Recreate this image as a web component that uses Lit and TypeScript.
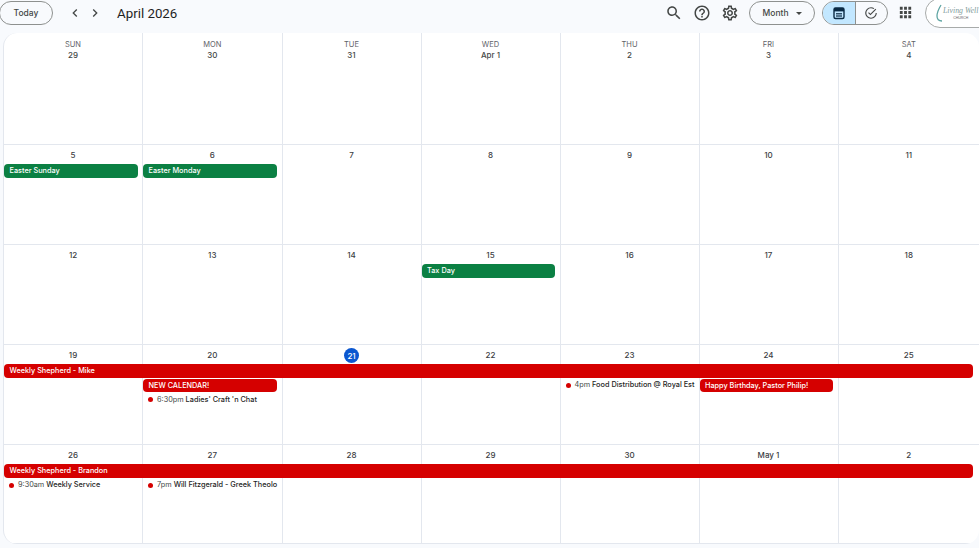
import { LitElement, html, css, svg } from "lit";
import { customElement } from "lit/decorators.js";

type Ev = { col: number; span: number; row: number; text: string; kind: "green" | "red" | "dot"; time?: string };
type Week = { days: string[]; today?: number; events: Ev[] };

const DAYS = ["SUN", "MON", "TUE", "WED", "THU", "FRI", "SAT"];
const WEEKS: Week[] = [
  { days: ["29", "30", "31", "Apr 1", "2", "3", "4"], events: [] },
  {
    days: ["5", "6", "7", "8", "9", "10", "11"],
    events: [
      { col: 1, span: 1, row: 2, text: "Easter Sunday", kind: "green" },
      { col: 2, span: 1, row: 2, text: "Easter Monday", kind: "green" },
    ],
  },
  {
    days: ["12", "13", "14", "15", "16", "17", "18"],
    events: [{ col: 4, span: 1, row: 2, text: "Tax Day", kind: "green" }],
  },
  {
    days: ["19", "20", "21", "22", "23", "24", "25"],
    today: 2,
    events: [
      { col: 1, span: 7, row: 2, text: "Weekly Shepherd - Mike", kind: "red" },
      { col: 2, span: 1, row: 3, text: "NEW CALENDAR!", kind: "red" },
      { col: 2, span: 1, row: 4, text: "Ladies' Craft 'n Chat", time: "6:30pm", kind: "dot" },
      { col: 5, span: 1, row: 3, text: "Food Distribution @ Royal Est", time: "4pm", kind: "dot" },
      { col: 6, span: 1, row: 3, text: "Happy Birthday, Pastor Philip!", kind: "red" },
    ],
  },
  {
    days: ["26", "27", "28", "29", "30", "May 1", "2"],
    events: [
      { col: 1, span: 7, row: 2, text: "Weekly Shepherd - Brandon", kind: "red" },
      { col: 1, span: 1, row: 3, text: "Weekly Service", time: "9:30am", kind: "dot" },
      { col: 2, span: 1, row: 3, text: "Will Fitzgerald - Greek Theolo", time: "7pm", kind: "dot" },
    ],
  },
];

const icon = (d: string, size = 18, fill = "#444746") => html`<svg width=${size} height=${size} viewBox="0 0 24 24" fill=${fill}>${svg`<path d=${d}></path>`}</svg>`;

const SEARCH = "M15.5 14h-.79l-.28-.27C15.41 12.59 16 11.11 16 9.5 16 5.91 13.09 3 9.5 3S3 5.91 3 9.5 5.91 16 9.5 16c1.61 0 3.09-.59 4.23-1.57l.27.28v.79l5 4.99L20.49 19l-4.99-5zm-6 0C7.01 14 5 11.99 5 9.5S7.01 5 9.5 5 14 7.01 14 9.5 11.99 14 9.5 14z";
const HELP = "M11 18h2v-2h-2v2zm1-16C6.48 2 2 6.48 2 12s4.48 10 10 10 10-4.48 10-10S17.52 2 12 2zm0 18c-4.41 0-8-3.59-8-8s3.59-8 8-8 8 3.59 8 8-3.59 8-8 8zm0-14c-2.21 0-4 1.79-4 4h2c0-1.1.9-2 2-2s2 .9 2 2c0 2-3 1.75-3 5h2c0-2.25 3-2.5 3-5 0-2.21-1.79-4-4-4z";
const GEAR = "M19.43 12.98c.04-.32.07-.64.07-.98 0-.34-.03-.66-.07-.98l2.11-1.65c.19-.15.24-.42.12-.64l-2-3.46c-.09-.16-.26-.25-.44-.25-.06 0-.12.01-.17.03l-2.49 1c-.52-.4-1.08-.73-1.69-.98l-.38-2.65C14.46 2.18 14.25 2 14 2h-4c-.25 0-.46.18-.49.42l-.38 2.65c-.61.25-1.17.59-1.69.98l-2.49-1c-.06-.02-.12-.03-.18-.03-.17 0-.34.09-.43.25l-2 3.46c-.13.22-.07.49.12.64l2.11 1.65c-.04.32-.07.65-.07.98 0 .33.03.66.07.98l-2.11 1.65c-.19.15-.24.42-.12.64l2 3.46c.09.16.26.25.44.25.06 0 .12-.01.17-.03l2.49-1c.52.4 1.08.73 1.69.98l.38 2.65c.03.24.24.42.49.42h4c.25 0 .46-.18.49-.42l.38-2.65c.61-.25 1.17-.59 1.69-.98l2.49 1c.06.02.12.03.18.03.17 0 .34-.09.43-.25l2-3.46c.12-.22.07-.49-.12-.64l-2.11-1.65zm-1.98-1.71c.04.31.05.52.05.73 0 .21-.02.43-.05.73l-.14 1.13.89.7 1.08.84-.7 1.21-1.27-.51-1.04-.42-.9.68c-.43.32-.84.56-1.25.73l-1.06.43-.16 1.13-.2 1.35h-1.4l-.19-1.35-.16-1.13-1.06-.43c-.43-.18-.83-.41-1.23-.71l-.91-.7-1.06.43-1.27.51-.7-1.21 1.08-.84.89-.7-.14-1.13c-.03-.31-.05-.54-.05-.74s.02-.43.05-.73l.14-1.13-.89-.7-1.08-.84.7-1.21 1.27.51 1.04.42.9-.68c.43-.32.84-.56 1.25-.73l1.06-.43.16-1.13.2-1.35h1.39l.19 1.35.16 1.13 1.06.43c.43.18.83.41 1.23.71l.91.7 1.06-.43 1.27-.51.7 1.21-1.07.85-.89.7.14 1.13zM12 8c-2.21 0-4 1.79-4 4s1.79 4 4 4 4-1.79 4-4-1.79-4-4-4zm0 6c-1.1 0-2-.9-2-2s.9-2 2-2 2 .9 2 2-.9 2-2 2z";
const LEFT = "M15.4 7.4 14 6l-6 6 6 6 1.4-1.4L10.8 12z";
const RIGHT = "M8.6 7.4 10 6l6 6-6 6-1.4-1.4L13.2 12z";
const CHECK = "M12 2a10 10 0 1 0 10 10h-2a8 8 0 1 1-8-8 8 8 0 0 1 4.3 1.3l1.4-1.4A10 10 0 0 0 12 2zm7.6 2.6L11 13.2 8.4 10.6 7 12l4 4 10-10z";
const APPS = "M4 8h4V4H4v4zm6 12h4v-4h-4v4zm-6 0h4v-4H4v4zm0-6h4v-4H4v4zm6 0h4v-4h-4v4zm6-10v4h4V4h-4zm-6 4h4V4h-4v4zm6 6h4v-4h-4v4zm0 6h4v-4h-4v4z";

@customElement("app-root")
export class AppRoot extends LitElement {
  static styles = css`
    :host {
      display: block;
      width: 979px;
      height: 548px;
      overflow: hidden;
      background: #f8fafd;
      font-family: Inter, Roboto, "Liberation Sans", sans-serif;
      color: #1f1f1f;
    }
    .top {
      height: 33px;
      display: flex;
      align-items: flex-start;
      overflow: hidden;
    }
    .pill {
      box-sizing: border-box;
      height: 24px;
      margin-top: 1px;
      border: 1px solid #8e918f;
      border-radius: 12px;
      display: flex;
      align-items: center;
      justify-content: center;
      font-size: 8.5px;
      font-weight: 500;
      color: #444746;
    }
    .today { width: 54px; margin-left: -1px; }
    .nav { display: flex; gap: 4px; margin-left: 14px; padding-top: 5px; }
    .nav svg { display: block; }
    .title { font-family: Roboto, sans-serif; font-size: 13.3px; line-height: 27px; margin-left: 14px; font-weight: 400; color: #1f1f1f; }
    .spacer { flex: 1; }
    .tools { display: flex; gap: 10px; padding-top: 4px; margin-right: 10px; }
    .tools svg { display: block; }
    .month { width: 66px; gap: 7px; margin-right: 7px; }
    .caret { width: 0; height: 0; border: 3px solid transparent; border-top: 3px solid #444746; border-bottom: 0; }
    .toggle {
      box-sizing: border-box;
      width: 66px;
      height: 24px;
      margin-top: 1px;
      border: 1px solid #8e918f;
      border-radius: 12px;
      display: flex;
      overflow: hidden;
    }
    .toggle span { flex: 1; display: flex; align-items: center; justify-content: center; }
    .toggle .on { background: #c2e7ff; border-right: 1px solid #8e918f; }
    .apps { margin: 4px 0 0 8.5px; display: block; }
    .logo {
      box-sizing: border-box;
      flex: none;
      width: 70px;
      height: 30px;
      margin: -2px -16px 0 11.5px;
      border: 1px solid #a8abaa;
      border-radius: 15px;
      background: #fff;
      display: flex;
      align-items: center;
      padding-left: 10px;
      overflow: hidden;
    }
    .brand {
      display: flex;
      flex-direction: column;
      align-items: center;
      font-family: "Liberation Serif", serif;
      white-space: nowrap;
      color: #7f9c9b;
      margin-left: -2px;
    }
    .brand em { font-size: 7.8px; line-height: 10px; }
    .brand small { font-size: 3.5px; line-height: 4px; font-family: "Liberation Sans", sans-serif; color: #666; }
    .cal {
      box-sizing: border-box;
      width: 976px;
      height: 511px;
      margin-left: 3px;
      background: #fff;
      border-left: 1px solid #e3e7ee;
      border-radius: 14px;
      display: grid;
      grid-template-rows: 112px 100px 100px 100px 99px;
      overflow: hidden;
    }
    .week {
      display: grid;
      grid-template-columns: 139px 139.5px 139px 139px 139px 139px 1fr;
      grid-template-rows: var(--head, 19px) 14.75px 14.75px 14.75px 1fr;
      border-bottom: 1px solid #e3e7ee;
      min-height: 0;
    }
    .cell {
      grid-row: 1 / -1;
      border-right: 1px solid #e3e7ee;
      display: flex;
      flex-direction: column;
      align-items: center;
      padding-top: 3px;
      font-size: 8px;
      font-weight: 500;
      color: #3c4043;
    }
    .cell:nth-child(7) { border-right: 0; }
    .dow { font-size: 7.5px; font-weight: 400; color: #5f6368; line-height: 11px; margin-top: 2.5px; margin-bottom: -1.5px; }
    .num { line-height: 14px; height: 14px; display: flex; align-items: center; justify-content: center; min-width: 14px; }
    .first .num { color: #444746; }
    .today-num { background: #0b57d0; color: #fff; border-radius: 50%; width: 15px; height: 15px; min-width: 15px; font-size: 8px; margin-top: 0; }
    .ev {
      z-index: 1;
      box-sizing: border-box;
      height: 13.5px;
      margin-right: 5.5px;
      border-radius: 4px;
      padding-left: 5.5px;
      font-size: 7.3px;
      line-height: 13.5px;
      font-weight: 500;
      color: #fff;
      white-space: nowrap;
      overflow: hidden;
      min-width: 0;
    }
    .green { background: #0b8043; }
    .red { background: #d50000; }
    .wide { margin-right: 6px; }
    .dot {
      color: #1f1f1f;
      display: flex;
      align-items: center;
      gap: 4px;
      padding-left: 5px;
      margin-right: 0;
      margin-top: -0.5px;
    }
    .dot i { flex: none; width: 5px; height: 5px; border-radius: 50%; background: #d50000; }
    .dot b { font-weight: 400; color: #444746; margin-right: 2px; }
  `;

  render() {
    return html`
      <div class="top">
        <div class="pill today">Today</div>
        <div class="nav">${icon(LEFT, 16)}${icon(RIGHT, 16)}</div>
        <div class="title">April 2026</div>
        <div class="spacer"></div>
        <div class="tools">${icon(SEARCH)}${icon(HELP)}${icon(GEAR)}</div>
        <div class="pill month">Month <span class="caret"></span></div>
        <div class="toggle">
          <span class="on">
            <svg width="14" height="14" viewBox="0 0 14 14">
              <rect x="2" y="2" width="10" height="10.5" rx="1.5" fill="none" stroke="#0a2a44" stroke-width="1.4"></rect>
              <rect x="2" y="2" width="10" height="3.4" fill="#0a2a44"></rect>
              <rect x="4" y="7.2" width="6" height="1.2" fill="#0a2a44"></rect>
              <rect x="4" y="9.4" width="6" height="1.2" fill="#0a2a44"></rect>
            </svg>
          </span>
          <span>${icon(CHECK, 14)}</span>
        </div>
        <span class="apps">${icon(APPS, 17)}</span>
        <div class="logo">
          <svg width="9" height="18" viewBox="0 0 9 18"><path d="M5 1C2 6 1 9 1 12c0 3 2 5 5 5" fill="none" stroke="#5fa5a3" stroke-width="1.3"></path></svg>
          <div class="brand"><em>Living Well</em><small>CHURCH</small></div>
        </div>
      </div>
      <div class="cal">
        ${WEEKS.map((w, i) => html`
          <div class="week ${i === 0 ? "first" : ""}" style=${i === 0 ? "--head:32px" : ""}>
            ${w.days.map((d, c) => html`
              <div class="cell" style="grid-column:${c + 1}">
                ${i === 0 ? html`<div class="dow">${DAYS[c]}</div>` : ""}
                <div class="num ${w.today === c ? "today-num" : ""}">${d}</div>
              </div>`)}
            ${w.events.map((e) => html`
              <div class="ev ${e.kind} ${e.span > 1 ? "wide" : ""}" style="grid-column:${e.col} / span ${e.span};grid-row:${e.row}">
                ${e.kind === "dot"
                  ? html`<i></i><span><b>${e.time}</b>${e.text}</span>`
                  : e.text}
              </div>`)}
          </div>`)}
      </div>
    `;
  }
}
